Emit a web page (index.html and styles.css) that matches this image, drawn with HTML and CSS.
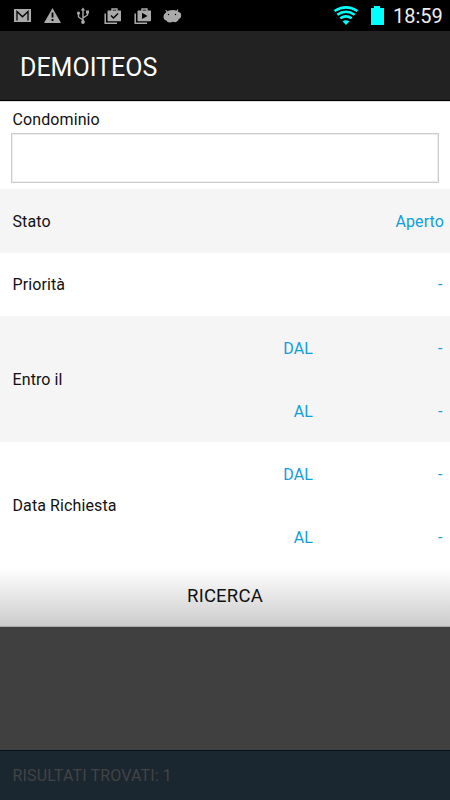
FILE: index.html
```html
<!DOCTYPE html>
<html lang="it">
<head>
<meta charset="utf-8">
<title>DEMOITEOS</title>
<link rel="stylesheet" href="styles.css">
</head>
<body>
<div class="status">
  <div class="notifications">
    <svg width="30" height="31" viewBox="8 0 30 31"><path fill="#aaa" d="M14 9h17v13H14z"/><path d="M17 20.500V11.500l5.500 5.300L28 11.500v9" fill="none" stroke="#000" stroke-width="1.300"/></svg>
    <svg width="30" height="31" viewBox="38 0 30 31"><path fill="#aaa" d="M52.500 8L61 23H44z"/><path d="M52.500 12.500v5M52.500 19v2" stroke="#000" stroke-width="1.800"/></svg>
    <svg width="30" height="31" viewBox="68 0 30 31"><g fill="none" stroke="#aaa" stroke-width="1.400"><path d="M83 22V9M83 20l-4.500-3v-4M83 18l4.500-3v-3"/></g><path fill="#aaa" d="M83 7.500l2.200 3h-4.400zM86 10.500h3v3h-3z"/><circle cx="78.500" cy="13" r="1.600" fill="#aaa"/><circle cx="83" cy="22" r="1.900" fill="#aaa"/></svg>
    <svg width="30" height="31" viewBox="98 0 30 31"><path d="M105.200 13.500v9.800H117" fill="none" stroke="#aaa" stroke-width="1.500"/><path d="M112 11V9h5v2" fill="none" stroke="#aaa" stroke-width="1.400"/><rect x="107.500" y="10.500" width="13.500" height="10.700" rx=".6" fill="#aaa"/><path d="M111 15.500l2.500 2.500 4.500-4.500" fill="none" stroke="#000" stroke-width="1.400"/></svg>
    <svg width="30" height="31" viewBox="128 0 30 31"><path d="M135.200 13.500v9.800H147" fill="none" stroke="#aaa" stroke-width="1.500"/><path d="M142 11V9h5v2" fill="none" stroke="#aaa" stroke-width="1.400"/><rect x="137.500" y="10.500" width="13.500" height="10.700" rx=".6" fill="#aaa"/><path d="M142 12.700l5.500 3.200-5.500 3.200z"/></svg>
    <svg width="30" height="31" viewBox="158 0 30 31"><path d="M168 13l-2.300-3M176 13l2-3.500" stroke="#aaa" stroke-width="1.100"/><path fill="#aaa" d="M165.500 13c2.500-3.700 11-3.700 13.500-.8 3 .4 3 6-.2 6.800-.8 3-3.800 3.700-5.800 2.700-3 1.300-6 .8-6.800-1.500-3 .4-3.700-5.500-.7-7.200z"/><circle cx="168.500" cy="14.500" r=".7"/><circle cx="175.500" cy="14.500" r=".7"/></svg>
  </div>
  <div class="system">
    <svg width="60" height="31" viewBox="330 0 60 31"><g fill="none" stroke="#0ff" stroke-width="2.600"><path d="M334.500 11q11.500-7.200 23 0"/><path d="M337.300 14.700q8.700-6 17.400 0"/><path d="M340.300 18.300q5.700-4 11.400 0"/></g><path fill="#0ff" d="M342.500 21.300q3.500-2.200 7 0L346 25zM371 8h3V6h6v2h4v17h-13z"/></svg>
    <span class="clock">18:59</span>
  </div>
</div>
<header class="title"><span>DEMOITEOS</span></header>
<main>
  <section class="search">
    <label for="condominio">Condominio</label>
    <input id="condominio" type="text">
  </section>
  <section class="row shaded state"><span>Stato</span><span class="value">Aperto</span></section>
  <section class="row priority"><span>Priorità</span><span class="value dash">-</span></section>
  <section class="range shaded">
    <span>Entro il</span>
    <div class="dates"><span>DAL</span><span class="dash">-</span><span>AL</span><span class="dash">-</span></div>
  </section>
  <section class="range">
    <span>Data Richiesta</span>
    <div class="dates"><span>DAL</span><span class="dash">-</span><span>AL</span><span class="dash">-</span></div>
  </section>
  <button class="submit">RICERCA</button>
</main>
<div class="backdrop"></div>
<footer>RISULTATI TROVATI: 1</footer>
</body>
</html>
```
FILE: styles.css
```css
* { box-sizing: border-box; }
body {
  margin: 0;
  width: 450px;
  height: 800px;
  display: flex;
  flex-direction: column;
  overflow: hidden;
  background: #fff;
  color: #111;
  font: 16px/20px Roboto, sans-serif;
  letter-spacing: .1px;
}
svg { display: block; }
.status {
  height: 31px;
  flex: none;
  display: flex;
  justify-content: space-between;
  background: #000;
}
.notifications { display: flex; padding-left: 8px; }
.system { display: flex; width: 120px; }
.clock { color: #eee; font-size: 20px; line-height: 33px; margin-left: 3px; letter-spacing: 0; }
.title {
  height: 70px;
  flex: none;
  padding-left: 20px;
  background: #222;
  border-bottom: 1px solid #000;
  color: #fff;
  font-size: 25px;
  line-height: 74px;
  letter-spacing: 0;
}
.search {
  height: 88px;
  padding: 8px 11px 0;
  border-top: 1px solid #ddd;
}
label { display: block; padding-left: 1.5px; height: 23px; }
input {
  display: block;
  width: 428px;
  height: 50px;
  border: 1px solid #ccc;
  box-shadow: inset 0 0 0 1px #eee;
  outline: 0;
  background: #fff;
}
.row {
  height: 63px;
  padding: 0 6px 0 12.5px;
  display: flex;
  align-items: center;
  justify-content: space-between;
}
.state { height: 64px; padding-top: 2px; }
.shaded { background: #f5f5f5; }
.value, .dates { color: #109edc; }
.dash { padding-right: 1.5px; }
.range {
  height: 126px;
  padding: 2px 6px 0 12.5px;
  display: flex;
  align-items: center;
  justify-content: space-between;
}
.dates {
  display: grid;
  grid-template: 63px 61px / 100px 131px;
  align-items: center;
  text-align: right;
}
.dates span:nth-child(-n+2) { padding-bottom: 1px; }
.submit {
  display: block;
  width: 100%;
  height: 59px;
  padding: 0 0 2px;
  border: 0;
  border-bottom: 1px solid #aaa;
  background: linear-gradient(#fff, #ccc);
  color: #111;
  font: 18.5px/54px Roboto, sans-serif;
  letter-spacing: .2px;
}
.backdrop { flex: 1; background: #404040; }
footer {
  height: 50px;
  flex: none;
  padding-left: 12.5px;
  border-top: 1px solid #06121b;
  background: #1a2630;
  color: #444;
  line-height: 49px;
  letter-spacing: .15px;
}
```
